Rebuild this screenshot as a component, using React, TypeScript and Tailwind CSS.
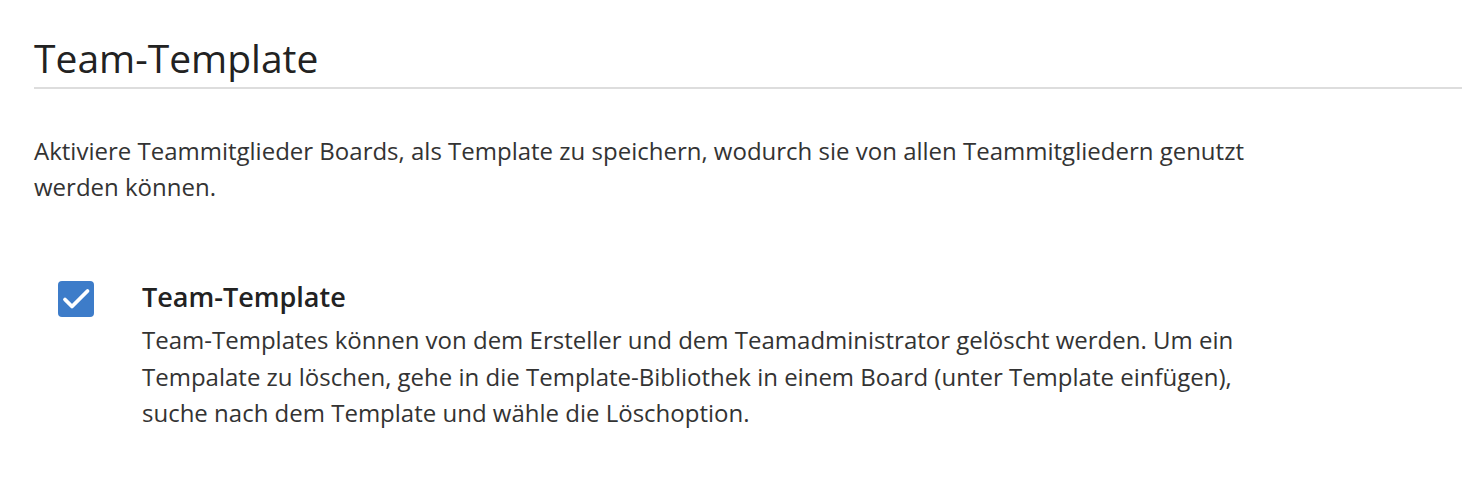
import React from "react";

export default function App() {
  return (
    <div className="min-h-[478px] bg-white pl-[34px] pt-[34px]" style={{ fontFamily: '"Open Sans", sans-serif' }}>
      <h1 className="text-[39px] leading-[48px] font-normal text-[#222222]">Team-Template</h1>
      <div className="mt-[5px] h-[2px] bg-[#dddddd]" />
      <div className="max-w-[1230px]">
        <p className="mt-[44px] text-[24px] leading-[36px] text-[#333333]">
          Aktiviere Teammitglieder Boards, als Template zu speichern, wodurch sie von allen Teammitgliedern genutzt werden können.
        </p>
        <div className="mt-[74px] flex">
          <div className="ml-[24px] mt-[2px] h-[36px] w-[36px] shrink-0 rounded-[4px] bg-[#3d7cc9]">
            <svg width="36" height="36" viewBox="0 0 36 36" fill="none">
              <path d="M7 18.5L14 25.5L29.5 10" stroke="white" strokeWidth="3.8" strokeLinecap="round" strokeLinejoin="round" />
            </svg>
          </div>
          <div className="ml-[48px]">
            <div className="text-[27px] leading-[36px] font-semibold text-[#222222]">Team-Template</div>
            <p className="mt-[7px] text-[24px] leading-[36.5px] text-[#333333]">
              Team-Templates können von dem Ersteller und dem Teamadministrator gelöscht werden. Um ein Tempalate zu löschen, gehe in die Template-Bibliothek in einem Board (unter Template einfügen), suche nach dem Template und wähle die Löschoption.
            </p>
          </div>
        </div>
      </div>
    </div>
  );
}
